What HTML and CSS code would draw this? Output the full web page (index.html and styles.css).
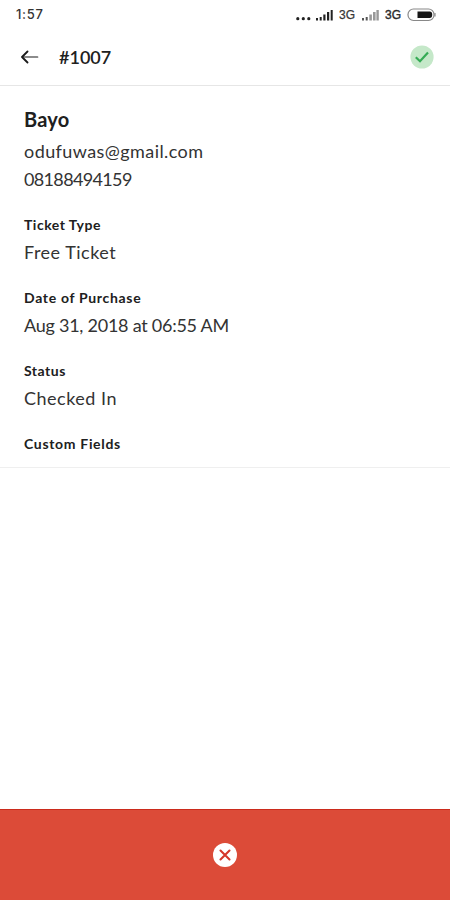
FILE: index.html
```
<!DOCTYPE html>
<html lang="en">
<head>
<meta charset="utf-8">
<meta name="viewport" content="width=device-width, initial-scale=1">
<title>Ticket #1007</title>
<link rel="stylesheet" href="styles.css">
</head>
<body>
<div class="screen">
  <div class="status-bar">
    <span class="clock">1:57</span>
    <div class="indicators">
      <svg class="dots" width="15" height="12" viewBox="0 0 15 12"><circle cx="1.800" cy="9.700" r="1.600"/><circle cx="7.300" cy="9.700" r="1.600"/><circle cx="12.800" cy="9.700" r="1.600"/></svg>
      <svg class="signal" width="17" height="12" viewBox="0 0 17 12"><path d="M0 9h2v2.500H0zM3.700 8h2v3.500h-2zM7.300 5.500h2.200v6H7.300zM11 3h2.200v8.500H11zM14.700 1h2v10.500h-2z"/></svg>
      <span class="network">3G</span>
      <svg class="signal signal-weak" width="17" height="12" viewBox="0 0 17 12"><path class="first-bars" d="M0 9h2v2.500H0zM3.700 8h2v3.500h-2z"/><path d="M7.300 5.500h2.600v6H7.300zM11 3h2.600v8.500H11zM14.400 1h2.400v10.500h-2.400z"/></svg>
      <span class="network network-strong">3G</span>
      <svg class="battery" width="29" height="14" viewBox="0 0 29 14"><rect x="1" y="1" width="26" height="11.500" rx="5.500" fill="#fff" stroke="#888" stroke-width="1.200"/><path d="M28 5v3.500" stroke="#777"/><path d="M10.500 3.500h12.200q2.500 0 2.500 3.200t-2.500 3.200H10.500z" fill="#171717"/></svg>
    </div>
  </div>
  <header class="header">
    <svg class="back" width="18" height="16" viewBox="0 0 18 16" fill="none" stroke="#1a1a1a" stroke-linecap="round" stroke-linejoin="round"><path d="M2 8h14.500" stroke-width="1.700" stroke="#666"/><path d="M6.500 2.500L1 8l5.500 5.500" stroke-width="1.800"/></svg>
    <h1 class="title">#1007</h1>
    <svg class="check" width="24" height="24" viewBox="0 0 24 24"><circle cx="12" cy="12" r="11.600" fill="#c5e8c9"/><path d="M5.800 12.300l4.200 4 8-8.800" fill="none" stroke="#35ab55" stroke-width="2.200"/></svg>
  </header>
  <main class="details">
    <h2 class="name">Bayo</h2>
    <p class="value email">odufuwas@gmail.com</p>
    <p class="value phone">08188494159</p>
    <h3 class="label type-label">Ticket Type</h3>
    <p class="value type">Free Ticket</p>
    <h3 class="label date-label">Date of Purchase</h3>
    <p class="value date">Aug 31, 2018 at 06:55 AM</p>
    <h3 class="label status-label">Status</h3>
    <p class="value status">Checked In</p>
    <h3 class="label custom-label">Custom Fields</h3>
  </main>
  <footer class="action">
    <svg width="26" height="26" viewBox="0 0 26 26"><circle cx="13" cy="13" r="12" fill="#fff"/><path d="M8.500 8.500l9 9m0-9l-9 9" fill="none" stroke="#d5372a" stroke-width="2.100" stroke-linecap="round"/></svg>
  </footer>
</div>
</body>
</html>
```
FILE: styles.css
```
* { box-sizing: border-box; }
body { margin: 0; background: #fff; color: #202020; font-family: Lato, "Liberation Sans", sans-serif; }
h1, h2, h3, p { margin: 0; white-space: nowrap; }
svg { display: block; flex: none; }
.screen { width: 450px; height: 900px; display: flex; flex-direction: column; }
.status-bar { height: 29px; flex: none; display: flex; justify-content: space-between; padding: 0 14px 0 16px; }
.clock { font: 500 13px/29px Inter, sans-serif; color: #333; letter-spacing: .7px; }
.indicators { display: flex; align-items: center; fill: #222; }
.dots { margin-right: 5px; }
.signal { margin-right: 6px; }
.signal-weak { fill: #999; }
.first-bars { fill: #555; }
.network { width: 17px; margin-right: 6px; font: 12px/30px "Liberation Sans", sans-serif; color: #333; -webkit-text-stroke: .25px #444; }
.network-strong { margin-right: 5px; -webkit-text-stroke: .4px #222; }
.header { height: 57px; flex: none; display: flex; align-items: center; padding: 0 16px 0 21px; border-bottom: 1px solid #e6e6e6; }
.title { margin-left: 20px; font-size: 18px; line-height: 28px; font-weight: 600; }
.check { margin-left: auto; }
.details { height: 382px; flex: none; padding: 19px 24px 0; border-bottom: 1px solid #efefef; }
.name { font-size: 20px; line-height: 28px; height: 32px; font-weight: 700; letter-spacing: .2px; }
.value { font-size: 18px; line-height: 28px; color: #333; }
.label { margin-top: 22px; font-size: 14px; line-height: 20px; height: 23px; font-weight: 700; letter-spacing: .5px; }
.email { letter-spacing: .42px; }
.phone { letter-spacing: -.65px; }
.type, .status { letter-spacing: .5px; }
.date { letter-spacing: -.25px; }
.date-label, .custom-label { letter-spacing: .68px; }
.action { height: 91px; margin-top: auto; display: flex; justify-content: center; padding-top: 32px; background: #dc4b38; border-top: 1px solid #cb2b1c; }
```
